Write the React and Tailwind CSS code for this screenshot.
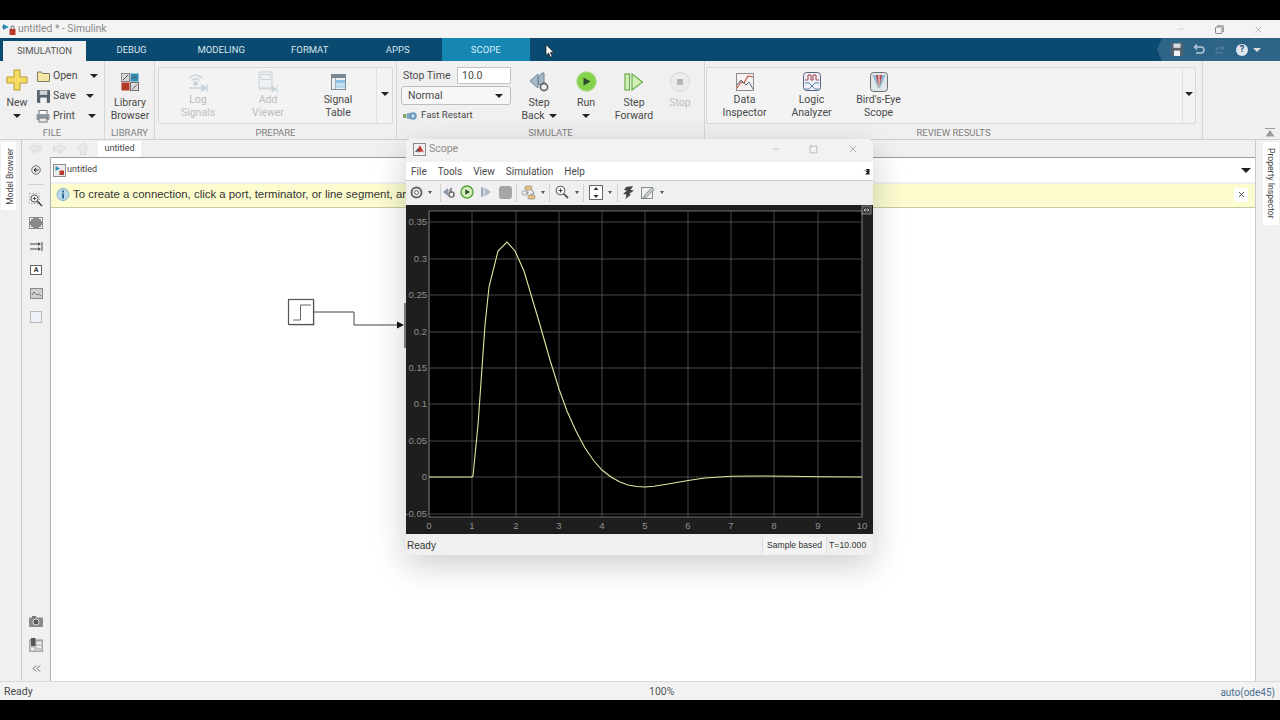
import { ChevronsLeft, X, Minus, Square } from "lucide-react";

const CURVE =
  "429,477 472,477 473,476 478,425 485,325 489,287 498,251 507,242 515,251 524,271 532,298 540,325 550,360 559,389 567,411 576,431 585,448 594,461 602,470 611,477 620,482 628,485 637,486.5 645,487 654,486.3 671,483.5 688,480.5 705,478 731,476.2 760,476 790,476.3 820,476.8 862,477";
const Y_TICKS = [
  ["0.35", 222],
  ["0.3", 259],
  ["0.25", 295],
  ["0.2", 332],
  ["0.15", 368],
  ["0.1", 404],
  ["0.05", 441],
  ["0", 477],
  ["-0.05", 514],
];
const X_TICKS = [429, 472, 516, 559, 602, 645, 688, 731, 774, 818, 862];

function Caret({ className = "" }) {
  return <span className={`inline-block h-0 w-0 border-x-[4px] border-t-[4px] border-x-transparent border-t-[#222] ${className}`} />;
}

function SmallCaret() {
  return <span className="inline-block h-0 w-0 border-x-[2.5px] border-t-[3px] border-x-transparent border-t-[#555]" />;
}

function RibbonButton({ icon, lines, caret, disabled, panel, width = "w-[70px]" }) {
  return (
    <div className={`flex shrink-0 flex-col items-center ${panel ? "pt-px" : "pt-[2px]"} ${width}`}>
      <div className="flex h-[25px] items-center justify-center">{icon}</div>
      <div className={`text-center text-[10.5px] leading-[13px] ${panel ? "-mt-px" : "mt-[2px]"} ${disabled ? "text-[#bdbdbd]" : "text-[#4a4a4a]"}`}>
        {lines.map((l, i) => (
          <div key={l} className="flex items-center justify-center gap-[4px]">
            {l}
            {caret && i === lines.length - 1 && l !== "" && <Caret />}
          </div>
        ))}
      </div>
    </div>
  );
}

function SectionLabel({ children }) {
  return <div className="absolute bottom-[-1px] left-0 right-0 h-[15px] text-center text-[9.5px] leading-[15px] text-[#808080]">{children}</div>;
}

function Section({ label, className, children }) {
  return (
    <div className={`relative h-full shrink-0 border-r border-[#d6d6d6] pt-[6px] ${className}`}>
      {children}
      <SectionLabel>{label}</SectionLabel>
    </div>
  );
}

function Tab({ label, active, scope, width = "w-[88.5px]" }) {
  const cls = active
    ? "mt-[3px] h-[20px] bg-[#f0f0f0] text-[#555]"
    : scope
      ? "h-[23px] bg-[#1687b3] pt-px text-[#d4eef8]"
      : "h-[23px] pt-px text-[#d7e4ec]";
  return <div className={`flex shrink-0 items-center justify-center text-[9.5px] ${width} ${cls}`}>{label}</div>;
}

function FileRow({ icon, label, caretClass }) {
  return (
    <div className="flex h-[20px] items-center">
      <div className="flex w-[14px] justify-center">{icon}</div>
      <span className="ml-[3px] text-[10.5px] text-[#4a4a4a]">{label}</span>
      <Caret className={caretClass} />
    </div>
  );
}

function ToolBtn({ children, className = "" }) {
  return <div className={`flex h-[24px] shrink-0 items-center justify-center pb-[2px] ${className}`}>{children}</div>;
}

function ToolSep({ className = "" }) {
  return (
    <div className={`flex h-[24px] w-[2px] shrink-0 justify-center py-[3px] ${className}`}>
      <span className="w-px bg-[#d2d2d2]" />
    </div>
  );
}

function Rail({ children, className = "" }) {
  return <div className={`flex h-[23.5px] items-center justify-center ${className}`}>{children}</div>;
}

function ScopeWindow() {
  return (
    <div className="absolute left-[406px] top-[139px] flex h-[416px] w-[467px] flex-col overflow-hidden rounded-t-[5px] rounded-b-[4px] bg-[#f0f0f0] font-[Roboto,sans-serif] shadow-[0_10px_34px_rgba(0,0,0,0.2)]">
      <div className="flex h-[23px] shrink-0 items-center bg-[#f2f2f2] pb-[3px]">
        <svg className="ml-[7px]" width="13" height="13" viewBox="0 0 13 13">
          <rect x="0.5" y="0.5" width="12" height="12" fill="#efefef" stroke="#8a8a8a" />
          <path d="M2 9 5 5.5 7 2.5 8.5 5 11 9.5 8.5 8.2 6 9.5 5 8.3Z" fill="#c0392b" />
          <path d="M2 9 5 5.5 6 8 5 8.3Z" fill="#34566f" />
        </svg>
        <span className="ml-[3px] text-[10.5px] text-[#8c8c8c]">Scope</span>
        <div className="ml-auto flex items-center">
          <Minus size={10} strokeWidth={1} color="#777" />
          <Square className="ml-[28px]" size={9} strokeWidth={1} color="#666" />
          <X className="ml-[29px] mr-[14px]" size={12} strokeWidth={1} color="#666" />
        </div>
      </div>
      <div className="flex h-[19px] shrink-0 items-center border-b border-[#c8c8c8] bg-white pl-[5px] pt-px text-[10px] text-[#4a4a4a]">
        <span>File</span>
        <span className="ml-[11px]">Tools</span>
        <span className="ml-[11px]">View</span>
        <span className="ml-[11px]">Simulation</span>
        <span className="ml-[11px]">Help</span>
        <svg className="ml-auto mr-[3px]" width="7" height="7" viewBox="0 0 7 7">
          <path d="M0 1 4 3.5 3 1 6.5 1 6.5 6.5 2 6.5 4 4.5Z" fill="#222" />
        </svg>
      </div>
      <div className="flex h-[24px] shrink-0 items-center bg-[#f0f0f0] pl-px">
        <ToolBtn className="w-[18px]">
          <svg width="13" height="13" viewBox="0 0 13 13">
            <circle cx="6.5" cy="6.5" r="5" fill="none" stroke="#666" strokeWidth="2" />
            <circle cx="6.5" cy="6.5" r="2" fill="none" stroke="#666" />
          </svg>
        </ToolBtn>
        <ToolBtn className="w-[10px]"><SmallCaret /></ToolBtn>
        <ToolSep className="ml-[4px]" />
        <ToolBtn className="w-[16px]">
          <svg width="14" height="14" viewBox="0 0 14 14">
            <path d="M1 7 6 3V11Z" fill="#8d99a5" />
            <path d="M6 6 9 2.5H10V8Z" fill="#8d99a5" />
            <circle cx="9.5" cy="9.5" r="2.6" fill="none" stroke="#666" strokeWidth="1.4" />
          </svg>
        </ToolBtn>
        <ToolBtn className="w-[20px]">
          <svg width="14" height="14" viewBox="0 0 14 14">
            <circle cx="7" cy="7" r="6" fill="#d2f0c0" stroke="#56a33c" strokeWidth="1.4" />
            <path d="M5.3 4.2 10 7 5.3 9.8Z" fill="#2f4f2c" />
          </svg>
        </ToolBtn>
        <ToolBtn className="w-[18px]">
          <svg width="12" height="12" viewBox="0 0 12 12">
            <rect x="1" y="1.5" width="2.4" height="9" fill="#98a9b8" />
            <path d="M4.5 1.5 11 6 4.5 10.5Z" fill="#a9bac9" />
          </svg>
        </ToolBtn>
        <ToolBtn className="w-[20px]">
          <span className="h-[13px] w-[13px] rounded-[3px] bg-[#a5a5a5]" />
        </ToolBtn>
        <ToolSep />
        <ToolBtn className="w-[22px]">
          <svg width="15" height="15" viewBox="0 0 15 15">
            <rect x="4" y="1" width="7" height="4" rx="1.5" fill="#e9c07c" stroke="#888" strokeWidth="0.7" />
            <rect x="1" y="6" width="6" height="4" rx="1.5" fill="#e8e8e8" stroke="#888" strokeWidth="0.7" />
            <rect x="7" y="10" width="7" height="4" rx="1.5" fill="#e9c07c" stroke="#888" strokeWidth="0.7" />
            <path d="M11 5 13 8 10 10M7 8H5" fill="none" stroke="#666" strokeWidth="0.8" />
          </svg>
        </ToolBtn>
        <ToolBtn className="w-[8px]"><SmallCaret /></ToolBtn>
        <ToolSep className="ml-px" />
        <ToolBtn className="w-[24px]">
          <svg width="14" height="14" viewBox="0 0 14 14">
            <circle cx="5.5" cy="5.5" r="4.3" fill="#f6f6f6" stroke="#666" strokeWidth="1.1" />
            <path d="M3.5 5.5h4M5.5 3.5v4" stroke="#333" strokeWidth="0.9" />
            <path d="M8.8 8.8 13 13" stroke="#555" strokeWidth="1.8" />
          </svg>
        </ToolBtn>
        <ToolBtn className="w-[6px]"><SmallCaret /></ToolBtn>
        <ToolSep className="ml-[2px]" />
        <ToolBtn className="w-[24px]">
          <svg width="14" height="15" viewBox="0 0 14 15">
            <rect x="0.5" y="0.5" width="13" height="14" fill="#fff" stroke="#666" />
            <path d="M7 2 9.5 5h-5ZM7 13 4.5 10h5Z" fill="#333" />
          </svg>
        </ToolBtn>
        <ToolBtn className="w-[4px]"><SmallCaret /></ToolBtn>
        <ToolSep className="ml-[4px]" />
        <ToolBtn className="w-[20px]">
          <svg width="13" height="13" viewBox="0 0 13 13">
            <path d="M4 1 11 0 8.5 4 12 4.5 7 8 9 8.5 3.5 13 4.5 8.5 1 8 5 4.5 2 4Z" fill="#444" />
          </svg>
        </ToolBtn>
        <ToolBtn className="w-[20px]">
          <svg width="14" height="14" viewBox="0 0 14 14">
            <rect x="0.5" y="2.5" width="11" height="11" fill="#eef1f2" stroke="#8b8b8b" />
            <path d="M3 11 11 2.5 13 4.5 5 12.5 2.5 13Z" fill="#c6d2d8" stroke="#6d6d6d" strokeWidth="0.7" />
          </svg>
        </ToolBtn>
        <ToolBtn className="w-[8px]"><SmallCaret /></ToolBtn>
      </div>
      <svg className="block h-[329px] w-[467px] shrink-0" viewBox="406 205 467 329">
        <rect x="406" y="205" width="467" height="329" fill="#1e1e1e" />
        <rect x="429" y="211" width="433" height="306" fill="#000" stroke="#6f6f6f" />
        {Y_TICKS.map(([label, y]) => (
          <g key={label}>
            <line x1="429" x2="862" y1={y} y2={y} stroke="#5c5c5c" strokeWidth="0.8" />
            <text x="427" y={y + 3} textAnchor="end" fontSize="9.5" fontFamily="Liberation Sans, sans-serif" fill="#8f8f8f">{label}</text>
          </g>
        ))}
        {X_TICKS.map((x, i) => (
          <g key={x}>
            <line x1={x} x2={x} y1="211" y2="517" stroke="#5c5c5c" strokeWidth="0.8" />
            <text x={x} y="529" textAnchor="middle" fontSize="9.5" fontFamily="Liberation Sans, sans-serif" fill="#8f8f8f">{i}</text>
          </g>
        ))}
        <polyline points={CURVE} fill="none" stroke="#e6e6a0" strokeWidth="1.1" />
        <rect x="862" y="206" width="9" height="8" fill="#3c3c3c" stroke="#a8a8a8" strokeWidth="0.7" />
        <path d="M864 210h5M864 210l1.5-1.5M864 210l1.5 1.5M869 210l-1.5-1.5M869 210l-1.5 1.5" stroke="#ddd" strokeWidth="0.7" fill="none" />
      </svg>
      <div className="flex h-[21px] flex-1 items-center bg-[#f0f0f0] pt-[2px] font-['Liberation_Sans',sans-serif] text-[8.6px] text-[#333]">
        <span className="ml-px text-[10px]">Ready</span>
        <span className="ml-auto flex h-[17px] w-[65px] items-center justify-center border-x border-[#dcdcdc] bg-[#f4f4f4]">Sample based</span>
        <span className="mr-[2px] flex h-[17px] w-[44px] items-center pl-[2px] tracking-[0.1px]">T=10.000</span>
      </div>
    </div>
  );
}

export default function App() {
  return (
    <div className="relative flex h-[720px] w-[1280px] flex-col overflow-hidden bg-black font-[Roboto,sans-serif]">
      <div className="h-[20px] shrink-0" />

      <div className="flex h-[18px] shrink-0 items-center bg-[#f4f4f4]">
        <svg className="ml-[2px]" width="14" height="14" viewBox="0 0 14 14">
          <path d="M1 2 7 5 1 8Z" fill="#2e8fb5" />
          <path d="M0 5h2" stroke="#555" />
          <rect x="7.5" y="7" width="6" height="6" fill="#bb3a2a" />
          <path d="M9 7V5.5a1.5 1.5 0 0 1 3 0V7" fill="none" stroke="#555" />
        </svg>
        <span className="ml-[2px] text-[10.3px] text-[#8a8a8a]">untitled * - Simulink</span>
        <div className="ml-auto flex items-center">
          <Minus size={10} strokeWidth={1} color="#aaa" />
          <svg className="ml-[29px]" width="9" height="9" viewBox="0 0 9 9" fill="none" stroke="#888">
            <rect x="0.5" y="2" width="6.5" height="6.5" rx="1" />
            <path d="M2.5 2V0.8H8.3V6.5H7" />
          </svg>
          <X className="ml-[29px] mr-[16px]" size={11} strokeWidth={1} color="#777" />
        </div>
      </div>

      <div className="flex h-[23px] shrink-0 bg-[#0b4a70] pl-[3px]">
        <Tab label="SIMULATION" active width="w-[83px]" />
        <Tab label="DEBUG" width="w-[91px]" />
        <Tab label="MODELING" />
        <Tab label="FORMAT" />
        <Tab label="APPS" width="w-[87.5px]" />
        <Tab label="SCOPE" scope />
        <div className="ml-auto flex h-[23px] w-[123px] items-center bg-[#2e6487] pl-[14px] [clip-path:polygon(0_50%,5px_0,100%_0,100%_100%,5px_100%)]">
          <svg width="12" height="13" viewBox="0 0 12 12" preserveAspectRatio="none">
            <rect width="12" height="12" rx="1" fill="#55626c" />
            <rect x="2.5" y="0.5" width="7" height="4" fill="#d6dbde" />
            <rect x="3" y="7" width="6" height="5" fill="#f1f1f1" />
          </svg>
          <svg className="ml-[10px]" width="12" height="11" viewBox="0 0 12 11" fill="none" stroke="#b4cbdb" strokeWidth="1.4">
            <path d="M1.5 3H8a3 3 0 0 1 0 6H3" />
            <path d="M4 0.5 1.5 3 4 5.5" />
          </svg>
          <svg className="ml-[10px]" width="10" height="10" viewBox="0 0 12 11" fill="none" stroke="#5c88a5" strokeWidth="1.2">
            <path d="M10.5 3H4a3 3 0 0 0 0 6H9" />
            <path d="M8 0.5 10.5 3 8 5.5" />
          </svg>
          <span className="ml-[11px] flex h-[12px] w-[12px] items-center justify-center rounded-full bg-[#dce6ec] text-[9px] font-bold leading-none text-[#24516f]">?</span>
          <Caret className="ml-[5px] border-t-[#ddd]" />
        </div>
      </div>

      <div className="relative flex h-[79px] shrink-0 border-b border-[#cfcfcf] bg-[#f0f0f0]">
        <Section label="FILE" className="w-[105px]">
          <div className="flex">
            <div className="flex w-[34px] flex-col items-center">
              <svg className="mt-[2px]" width="22" height="22" viewBox="0 0 22 22">
                <path d="M8 1h6v7h7v6h-7v7H8v-7H1V8h7Z" fill="#f4dc63" stroke="#b79a2d" />
              </svg>
              <span className="mt-[5px] text-[10.5px] leading-[13px] text-[#4a4a4a]">New</span>
              <Caret className="mt-[5px]" />
            </div>
            <div className="-mt-px flex flex-col pl-[2px]">
              <FileRow
                label="Open"
                caretClass="ml-[12px]"
                icon={
                  <svg width="13" height="11" viewBox="0 0 13 11">
                    <path d="M0.5 1h4l1 1.5h7V10.5H0.5Z" fill="#f3e6a6" stroke="#84795a" />
                  </svg>
                }
              />
              <FileRow
                label="Save"
                caretClass="ml-[11px]"
                icon={
                  <svg width="13" height="13" viewBox="0 0 12 12">
                    <rect width="12" height="12" rx="1" fill="#59646d" />
                    <rect x="2.5" y="0.5" width="7" height="4" fill="#cfd5d9" />
                    <rect x="3" y="7" width="6" height="5" fill="#f1f1f1" />
                  </svg>
                }
              />
              <FileRow
                label="Print"
                caretClass="ml-[13px]"
                icon={
                  <svg width="14" height="13" viewBox="0 0 14 13">
                    <rect x="3" y="0.5" width="8" height="4" fill="#fff" stroke="#777" />
                    <rect x="0.5" y="4" width="13" height="6" rx="1" fill="#8d99a3" />
                    <rect x="3" y="8" width="8" height="4" fill="#e8e8e8" stroke="#777" />
                  </svg>
                }
              />
            </div>
          </div>
        </Section>

        <Section label="LIBRARY" className="w-[50px]">
          <RibbonButton
            width="w-[50px]"
            lines={["Library", "Browser"]}
            icon={
              <svg width="18" height="18" viewBox="0 0 18 18">
                <rect x="0.5" y="0.5" width="8" height="8" fill="#d7d7d7" stroke="#8a8a8a" />
                <rect x="9.5" y="0.5" width="8" height="8" fill="#2f8fb6" />
                <rect x="0.5" y="9.5" width="8" height="8" fill="#b23a26" />
                <rect x="9.5" y="9.5" width="8" height="8" fill="#dcdcdc" stroke="#6d6d6d" />
                <path d="M2 7 7 2M11 6l2-3 3 3M11.5 16 16 11.5" stroke="#555" fill="none" />
              </svg>
            }
          />
        </Section>

        <Section label="PREPARE" className="w-[242px] pl-[3px]">
          <div className="flex h-[57px] w-[235px] rounded-[2px] border border-[#d8d8d8] bg-[#f3f3f3] pl-[4px]">
            <RibbonButton
              panel
              disabled
              lines={["Log", "Signals"]}
              icon={
                <svg width="22" height="21" viewBox="0 0 22 21" fill="none" stroke="#c9d2d8" strokeWidth="1.3">
                  <path d="M2 7a9 9 0 0 1 13 0M4.5 9.5a5.5 5.5 0 0 1 8 0" />
                  <circle cx="8.5" cy="12.5" r="1.8" fill="#c9d2d8" />
                  <path d="M2 17h17M20 13v8" />
                  <path d="M15 14l4 3-4 3Z" fill="#c9d2d8" />
                </svg>
              }
            />
            <RibbonButton
              panel
              disabled
              lines={["Add", "Viewer"]}
              icon={
                <svg width="22" height="22" viewBox="0 0 22 22" fill="none" stroke="#c9d2d8">
                  <rect x="2" y="1" width="13" height="16" fill="#eef2f4" />
                  <rect x="4" y="3.5" width="9" height="5" />
                  <path d="M2 18h17M20 14v8" />
                  <path d="M15 15l4 3-4 3Z" fill="#c9d2d8" />
                </svg>
              }
            />
            <RibbonButton
              panel
              lines={["Signal", "Table"]}
              icon={
                <svg width="15" height="16" viewBox="0 0 15 16">
                  <rect x="0.5" y="0.5" width="14" height="15" fill="#e9eff4" stroke="#7c8b96" />
                  <rect x="1" y="1" width="13" height="3" fill="#77868f" />
                  <rect x="5" y="6" width="9" height="3.5" fill="#8fc3e6" />
                  <rect x="5" y="10.5" width="9" height="3.5" fill="#b7d9ef" />
                  <path d="M4.5 4v11" stroke="#a4b0b8" />
                </svg>
              }
            />
            <div className="ml-auto flex w-[16px] items-center justify-center border-l border-[#dfdfdf] pb-[3px]">
              <Caret />
            </div>
          </div>
        </Section>

        <Section label="SIMULATE" className="w-[308px] pl-[4px]">
          <div className="flex">
            <div className="flex w-[110px] shrink-0 flex-col">
              <div className="flex h-[17px] items-center pl-[2px]">
                <span className="text-[10.5px] text-[#4a4a4a]">Stop Time</span>
                <span className="ml-auto flex h-[17px] w-[54px] items-center border border-[#c4c4c4] bg-white pl-[4px] text-[10.5px] text-[#4a4a4a]">10.0</span>
              </div>
              <div className="mt-[2px] flex h-[19px] items-center justify-between rounded-[3px] border border-[#bdbdbd] bg-[#f7f7f7] pl-[6px] pr-[7px] text-[10.5px] text-[#4a4a4a]">
                Normal
                <Caret />
              </div>
              <div className="mt-[2px] flex h-[17px] items-center pl-[2px] text-[9.6px] text-[#4a4a4a]">
                <svg width="14" height="10" viewBox="0 0 14 10">
                  <rect x="0" y="3" width="3.5" height="4" fill="#7fa96e" />
                  <rect x="4" y="2" width="3.5" height="6" fill="#89a9c2" />
                  <circle cx="10" cy="5" r="3.8" fill="#6e9dc2" />
                  <path d="M9 3l3 2-3 2Z" fill="#e9f1f6" />
                </svg>
                <span className="ml-[4px]">Fast Restart</span>
              </div>
            </div>
            <div className="ml-[3px] flex">
              <RibbonButton
                width="w-[50px]"
                caret
                lines={["Step", "Back"]}
                icon={
                  <svg width="21" height="21" viewBox="0 0 21 21">
                    <path d="M1 10 9 3V17Z" fill="#a7bac9" stroke="#6f8494" />
                    <path d="M9.5 6 13 2H15V12L9.5 14Z" fill="#a7bac9" stroke="#6f8494" />
                    <circle cx="15" cy="16" r="3.6" fill="#f0f0f0" stroke="#5e5e5e" strokeWidth="1.6" />
                  </svg>
                }
              />
              <div className="flex w-[44px] shrink-0 flex-col items-center pt-[2px]">
                <div className="flex h-[25px] items-center justify-center">
                  <svg width="21" height="21" viewBox="0 0 21 21">
                    <circle cx="10.5" cy="10.5" r="9.8" fill="#85d34a" stroke="#b7dc9e" />
                    <path d="M7.5 6.5 14.5 10.5 7.5 14.5Z" fill="#2e4a2c" />
                  </svg>
                </div>
                <span className="mt-[2px] text-[10.5px] leading-[13px] text-[#4a4a4a]">Run</span>
                <Caret className="mt-[5px]" />
              </div>
              <RibbonButton
                width="w-[52px]"
                lines={["Step", "Forward"]}
                icon={
                  <svg width="20" height="20" viewBox="0 0 20 20" fill="#d3f0ba" stroke="#69ad4a" strokeWidth="1.2">
                    <rect x="1" y="2" width="4.5" height="16" />
                    <path d="M8 2 18.5 10 8 18Z" />
                  </svg>
                }
              />
              <RibbonButton
                width="w-[40px]"
                disabled
                lines={["Stop"]}
                icon={
                  <span className="flex h-[20px] w-[20px] items-center justify-center rounded-full border border-[#dadada] bg-[#ececec]">
                    <span className="h-[6px] w-[6px] bg-[#b5b5b5]" />
                  </span>
                }
              />
            </div>
          </div>
        </Section>

        <Section label="REVIEW RESULTS" className="w-[498px] pl-[1px]">
          <div className="flex h-[57px] w-[490px] rounded-[2px] border border-[#d8d8d8] bg-[#f3f3f3] pl-[4px]">
            <RibbonButton
              panel
              width="w-[67px]"
              lines={["Data", "Inspector"]}
              icon={
                <svg width="18" height="18" viewBox="0 0 18 18" fill="none">
                  <rect x="0.5" y="0.5" width="17" height="17" fill="#f7f2f2" stroke="#8c8c8c" />
                  <path d="M1 15 5 9l3 1 4-7 5 1" stroke="#c4584a" strokeWidth="1.2" />
                  <path d="M1 12 5 7l5 5 3-3 4 7" stroke="#5e6f7a" />
                </svg>
              }
            />
            <RibbonButton
              panel
              width="w-[67px]"
              lines={["Logic", "Analyzer"]}
              icon={
                <svg width="18" height="19" viewBox="0 0 18 19" fill="none">
                  <rect x="0.5" y="0.5" width="17" height="18" rx="3" fill="#eef0f6" stroke="#56647a" />
                  <path d="M2 8h3V3h3v5h2V3h3v5h3" stroke="#a73e48" />
                  <path d="M2 11h4l3 3-3 3H2M16 11h-4l-3 3 3 3h4" stroke="#5d87a8" />
                </svg>
              }
            />
            <RibbonButton
              panel
              width="w-[67px]"
              lines={["Bird's-Eye", "Scope"]}
              icon={
                <svg width="18" height="20" viewBox="0 0 18 20">
                  <rect x="0.5" y="0.5" width="17" height="19" rx="3" fill="#dfe6ea" stroke="#6e6e6e" />
                  <path d="M2.5 3h13L10 16H8Z" fill="#8fb8cf" />
                  <path d="M6 3h6L9.5 15h-1Z" fill="#c0474f" />
                  <path d="M8.5 3h1v12h-1Z" fill="#eee" />
                </svg>
              }
            />
            <div className="ml-auto flex w-[13px] items-center justify-center border-l border-[#dfdfdf] pb-[3px]">
              <Caret />
            </div>
          </div>
        </Section>

        <div className="relative flex-1">
          <svg className="absolute bottom-[2px] right-[5px]" width="10" height="9" viewBox="0 0 10 9" fill="#9a9a9a">
            <path d="M0 0h10v1H0ZM5 2 9.5 8.5H0.5Z" />
          </svg>
        </div>
      </div>

      <div className="flex min-h-0 flex-1 bg-[#f0f0f0]">
        <div className="w-[22px] shrink-0 border-r border-[#c9c9c9] pl-px pt-[2px]">
          <div className="flex h-[68px] w-[15px] items-center justify-center bg-white pl-[3px]">
            <span className="rotate-180 whitespace-nowrap text-[8.5px] text-[#444] [writing-mode:vertical-rl]">Model Browser</span>
          </div>
        </div>

        <div className="flex min-w-0 flex-1 flex-col">
          <div className="flex h-[17px] shrink-0 items-end">
            <div className="flex w-[76px] shrink-0 items-center gap-[11px] pl-[7px] pb-[2px]">
              <svg width="13" height="11" viewBox="0 0 13 11"><path d="M0.5 5.5 6 0.5V3H12.5V8H6V10.5Z" fill="#e8e8e8" stroke="#dbdbdb" /></svg>
              <svg width="13" height="11" viewBox="0 0 13 11"><path d="M12.5 5.5 7 0.5V3H0.5V8H7V10.5Z" fill="#e8e8e8" stroke="#dbdbdb" /></svg>
              <svg width="12" height="13" viewBox="0 0 12 13"><path d="M6 0.5 11.5 6H9V12.5H3V6H0.5Z" fill="#e8e8e8" stroke="#dbdbdb" /></svg>
            </div>
            <div className="flex h-[16px] w-[43px] items-center justify-center bg-white text-[9px] text-[#444]">untitled</div>
          </div>

          <div className="flex min-h-0 flex-1">
            <div className="flex w-[28px] shrink-0 flex-col items-center">
              <div className="flex h-[25px] w-full items-center justify-center">
                <svg width="10" height="10" viewBox="0 0 10 10">
                  <circle cx="5" cy="5" r="4.3" fill="#e2e2e2" stroke="#777" />
                  <path d="M7.5 5h-4M5 3 3 5l2 2" stroke="#222" fill="none" />
                </svg>
              </div>
              <div className="mt-[2px] h-px w-[16px] bg-[#d0d0d0]" />
              <div className="mt-[3px] flex w-full flex-col">
                <Rail>
                  <svg width="14" height="14" viewBox="0 0 14 14">
                    <rect x="0.5" y="0.5" width="10" height="10" fill="none" stroke="#aaa" strokeDasharray="1.5 1.5" />
                    <circle cx="5.5" cy="5.5" r="3.6" fill="#f5f5f5" stroke="#555" />
                    <path d="M3.8 5.5h3.4M5.5 3.8v3.4" stroke="#333" strokeWidth="0.8" />
                    <path d="M8.3 8.3 13 13" stroke="#444" strokeWidth="1.6" />
                  </svg>
                </Rail>
                <Rail>
                  <svg width="14" height="12" viewBox="0 0 14 12">
                    <rect width="14" height="12" fill="#8a8a8a" />
                    <path d="M1.5 4V1.5H4M10 1.5h2.5V4M12.5 8v2.5H10M4 10.5H1.5V8" stroke="#fff" fill="none" />
                  </svg>
                </Rail>
                <Rail>
                  <svg width="13" height="11" viewBox="0 0 13 11">
                    <path d="M0 3h10M0 8h10M12 1v9" stroke="#444" />
                    <path d="M8 1l3 2-3 2ZM8 6l3 2-3 2Z" fill="#555" />
                  </svg>
                </Rail>
                <Rail>
                  <span className="flex h-[10px] w-[12px] items-center justify-center border border-[#666] bg-white text-[7px] font-bold leading-none text-[#333]">A</span>
                </Rail>
                <Rail>
                  <svg width="13" height="11" viewBox="0 0 13 11">
                    <rect x="0.5" y="0.5" width="12" height="10" fill="#cfcfcf" stroke="#888" />
                    <path d="M2 7l2-3 3 3 2-1 2 2" stroke="#777" fill="none" />
                  </svg>
                </Rail>
                <Rail>
                  <span className="h-[12px] w-[12px] border border-[#bcbcbc] bg-[#eef0f8]" />
                </Rail>
              </div>
              <div className="mt-auto flex w-full flex-col pb-[1px]">
                <Rail>
                  <svg width="14" height="11" viewBox="0 0 14 11">
                    <rect y="1.5" width="14" height="9.5" rx="1" fill="#8a8a8a" />
                    <rect x="3" y="0" width="4" height="2" fill="#777" />
                    <circle cx="7" cy="6" r="3" fill="#555" stroke="#ddd" />
                  </svg>
                </Rail>
                <Rail>
                  <svg width="14" height="14" viewBox="0 0 14 14">
                    <rect y="2" width="14" height="12" fill="#c6c6c6" stroke="#888" />
                    <rect x="2" y="0" width="4.5" height="8" fill="#555" />
                    <path d="M8 5h4M8 9h4M2 11h3" stroke="#fff" strokeWidth="1.3" />
                  </svg>
                </Rail>
                <Rail>
                  <ChevronsLeft size={13} strokeWidth={1.6} color="#555" />
                </Rail>
              </div>
            </div>

            <div className="flex min-w-0 flex-1 flex-col border-l border-[#b0b0b0]">
              <div className="flex h-[25px] shrink-0 items-center border-t border-[#9a9a9a] bg-white pl-[2px] pr-[4px]">
                <svg width="13" height="13" viewBox="0 0 13 13">
                  <rect x="0.5" y="0.5" width="12" height="12" fill="#eee" stroke="#8c8c8c" />
                  <path d="M2.5 2 7 4.5 2.5 7Z" fill="#2e8fb5" />
                  <rect x="6.5" y="6.5" width="4.5" height="4.5" fill="#b73a2c" />
                </svg>
                <span className="ml-[1px] text-[9px] text-[#444]">untitled</span>
                <Caret className="ml-auto border-x-[5px] border-t-[5px] border-t-[#222]" />
              </div>
              <div className="mt-[2px] flex h-[24px] shrink-0 items-center border-b border-[#c8c8a8] bg-[#fcfccf] pb-[2px] pl-[5px] pr-[7px]">
                <svg className="shrink-0" width="14" height="14" viewBox="0 0 14 14">
                  <circle cx="7" cy="6.5" r="6" fill="#bcd9ea" stroke="#8ab1c9" />
                  <rect x="6" y="5.5" width="2" height="5" fill="#2f6d94" />
                  <rect x="6" y="2.5" width="2" height="2" fill="#2f6d94" />
                </svg>
                <span className="ml-[3px] min-w-0 flex-1 overflow-hidden whitespace-nowrap font-['Liberation_Sans',sans-serif] text-[11.4px] text-[#333]">
                  To create a connection, click a port, terminator, or line segment, and drag to connect.
                </span>
                <span className="flex h-[14px] w-[14px] shrink-0 items-center justify-center rounded-[2px] bg-white">
                  <X size={9} strokeWidth={2.4} color="#444" />
                </span>
              </div>
              <div className="relative min-h-0 flex-1 bg-white">
                <svg className="absolute left-[236px] top-[90px]" width="120" height="52" viewBox="0 0 120 52">
                  <rect x="3" y="3" width="25" height="25" fill="#ddd" />
                  <rect x="1.5" y="1.5" width="25" height="25" fill="#fff" stroke="#555" strokeWidth="1.2" />
                  <path d="M6 22H13.5V7H24" fill="none" stroke="#666" />
                  <path d="M27 14H67V27H112" fill="none" stroke="#444" />
                  <path d="M110 23.5 117 27 110 30.5Z" fill="#111" />
                  <path d="M118 5V50" stroke="#666" strokeWidth="1.6" />
                </svg>
              </div>
            </div>
          </div>
        </div>

        <div className="w-[25px] shrink-0 border-l border-[#c9c9c9] pl-[7px] pt-[2px]">
          <div className="flex h-[83px] w-[16px] items-center justify-center bg-white">
            <span className="whitespace-nowrap text-[8.6px] text-[#444] [writing-mode:vertical-rl]">Property Inspector</span>
          </div>
        </div>
      </div>

      <div className="flex h-[19px] shrink-0 items-center border-t border-[#dadada] bg-[#f2f2f2] pl-[4px] pr-[5px] pt-[2px] text-[10.5px]">
        <span className="w-[60px] text-[#4a4a4a]">Ready</span>
        <span className="ml-[585px] text-[#555]">100%</span>
        <span className="ml-auto text-[10px] text-[#4a6f92]">auto(ode45)</span>
      </div>
      <div className="h-[20px] shrink-0" />

      <ScopeWindow />

      <svg className="absolute left-[545px] top-[44px]" width="10" height="14" viewBox="0 0 10 14">
        <path d="M1 0.5V11.5L3.6 9 5.5 13.2 7.2 12.4 5.4 8.4H8.8Z" fill="#fff" stroke="#111" strokeWidth="0.7" />
      </svg>
    </div>
  );
}
